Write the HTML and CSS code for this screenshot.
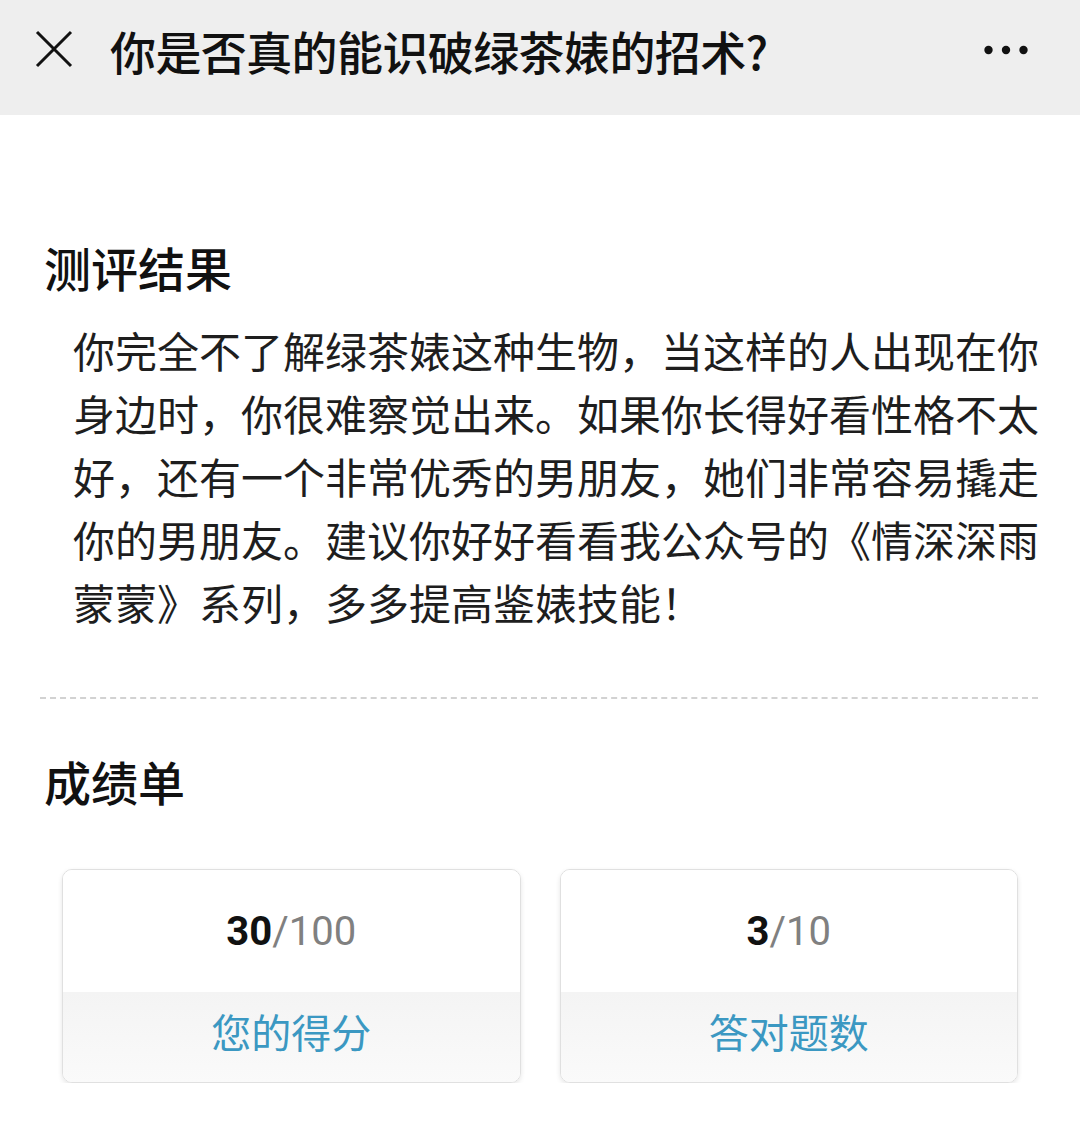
FILE: index.html
```html
<!DOCTYPE html>
<html lang="zh-CN">
<head>
<meta charset="utf-8">
<title>你是否真的能识破绿茶婊的招术?</title>
<link rel="stylesheet" href="styles.css">
</head>
<body>
<header class="topbar">
  <svg class="icon-close" width="38" height="38" viewBox="0 0 38 38" aria-hidden="true">
    <path d="M2 2 L36 36 M36 2 L2 36" stroke="#111" stroke-width="3" fill="none" stroke-linecap="butt"/>
  </svg>
  <h1 class="title">你是否真的能识破绿茶婊的招术?</h1>
  <svg class="icon-more" width="44" height="10" viewBox="0 0 44 10" aria-hidden="true">
    <circle cx="4.5" cy="5" r="4.2" fill="#111"/>
    <circle cx="22" cy="5" r="4.2" fill="#111"/>
    <circle cx="39.5" cy="5" r="4.2" fill="#111"/>
  </svg>
</header>
<main class="content">
  <section class="result">
    <h2 class="section-title">测评结果</h2>
    <p class="result-text">你完全不了解绿茶婊这种生物，当这样的人出现在你身边时，你很难察觉出来。如果你长得好看性格不太好，还有一个非常优秀的男朋友，她们非常容易撬走你的男朋友。建议你好好看看我公众号的《情深深雨蒙蒙》系列，多多提高鉴婊技能！</p>
  </section>
  <div class="divider"></div>
  <section class="grades">
    <h2 class="section-title grades-title">成绩单</h2>
    <div class="cards">
      <div class="card">
        <div class="card-value"><b>30</b><span>/100</span></div>
        <div class="card-label">您的得分</div>
      </div>
      <div class="card">
        <div class="card-value"><b>3</b><span>/10</span></div>
        <div class="card-label">答对题数</div>
      </div>
    </div>
  </section>
</main>
</body>
</html>
```
FILE: styles.css
```css
html, body {
  margin: 0;
  padding: 0;
  background: #ffffff;
}
body {
  font-family: "Noto Sans CJK SC", "Noto Sans", sans-serif;
  color: #1a1a1a;
  width: 1080px;
}
.topbar {
  height: 115px;
  background: #eeeeee;
  display: flex;
  align-items: center;
  padding: 0 52px 0 35px;
  box-sizing: border-box;
}
.icon-close {
  flex: none;
  margin-top: -18px;
}
.title {
  margin: -16px 0 0 37px;
  font-size: 46px;
  font-weight: 500;
  line-height: 60px;
  color: #111;
  flex: 1;
  letter-spacing: -0.6px;
}
.icon-more {
  flex: none;
  margin-top: -16px;
}
.content {
  padding: 0 38px 0 44px;
}
.section-title {
  margin: 122px 0 0 0;
  font-size: 47px;
  line-height: 60px;
  font-weight: 500;
  color: #111;
}
.result-text {
  margin: 21px 0 0 0;
  padding-left: 29px;
  font-size: 42px;
  line-height: 63px;
  color: #1e1e1e;
}
.divider {
  margin: 64px 4px 0 -4px;
  border-top: 2px dashed #d2d2d2;
}
.grades-title {
  margin-top: 52px;
}
.cards {
  display: grid;
  grid-template-columns: 1fr 1fr;
  gap: 39px;
  margin: 58px 24px 0 18px;
}
.card {
  border: 1px solid #e0e0e0;
  border-radius: 10px;
  overflow: hidden;
  box-shadow: 0 2px 5px rgba(0,0,0,0.1);
  display: flex;
  flex-direction: column;
}
.card-value {
  height: 122px;
  display: flex;
  align-items: center;
  justify-content: center;
  font-family: Roboto, "Noto Sans", sans-serif;
  font-size: 40px;
  color: #808080;
  background: #fff;
}
.card-value b {
  color: #111;
  font-weight: 700;
}
.card-label {
  height: 90px;
  box-sizing: border-box;
  padding-bottom: 12px;
  display: flex;
  align-items: center;
  justify-content: center;
  background: linear-gradient(#f4f4f4, #fafafa);
  color: #3b98c2;
  font-size: 40px;
}
```
